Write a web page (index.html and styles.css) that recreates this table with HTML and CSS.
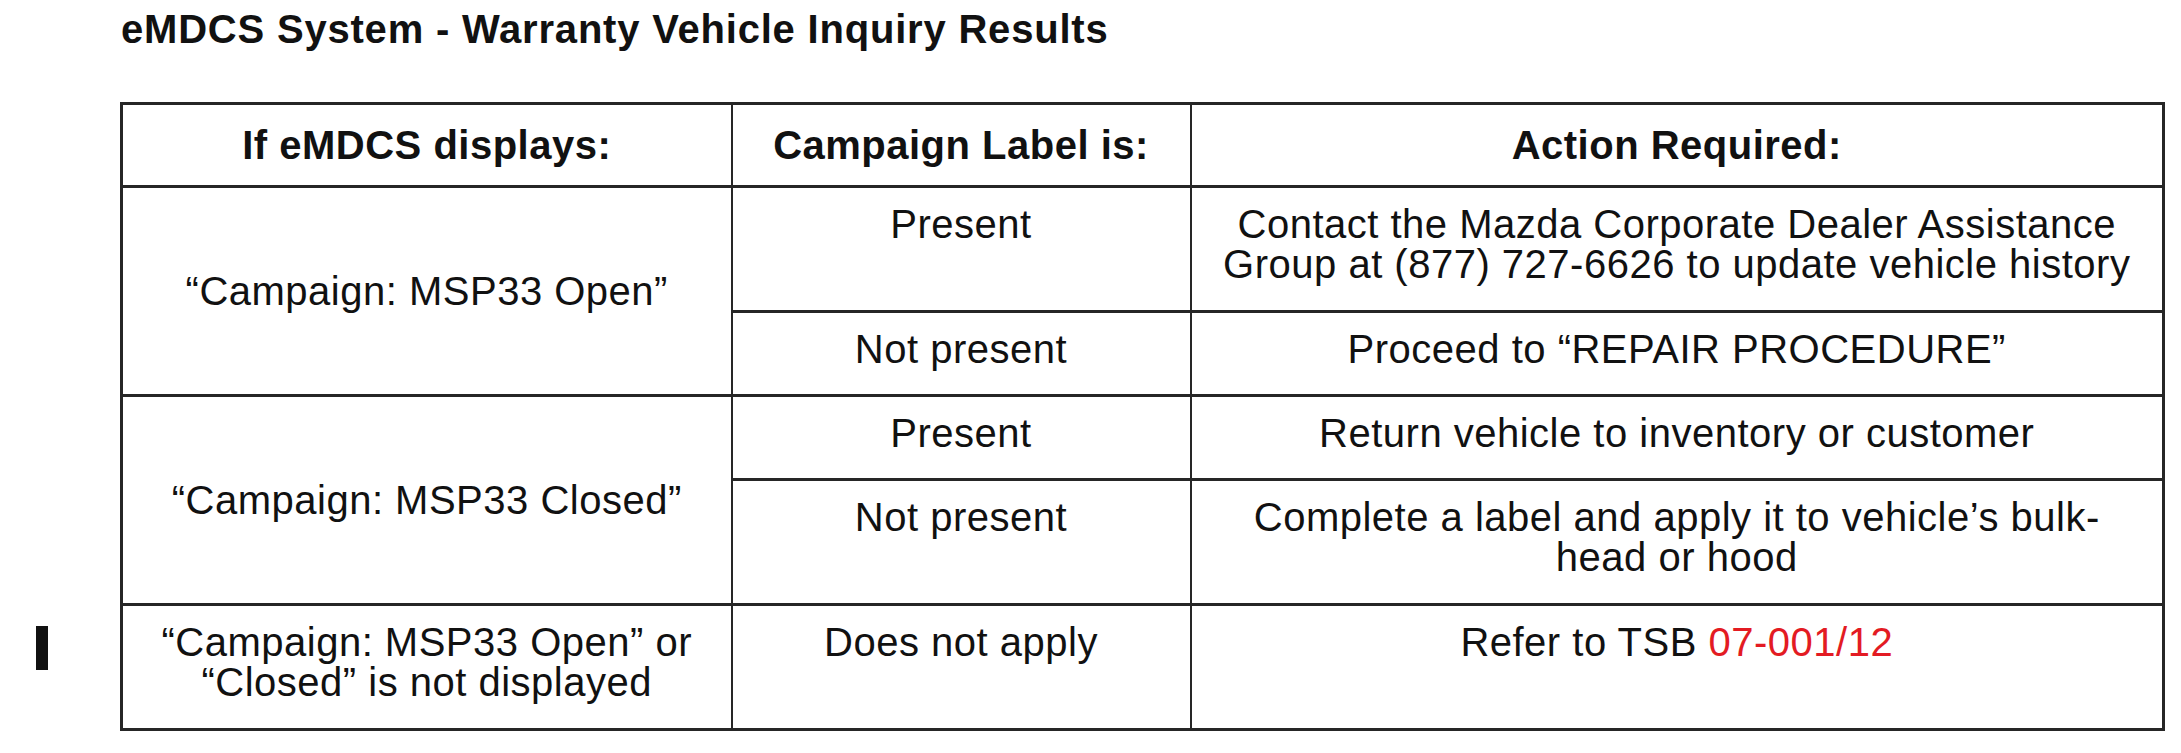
FILE: index.html
```html
<!DOCTYPE html>
<html>
<head>
<meta charset="utf-8">
<title>eMDCS System - Warranty Vehicle Inquiry Results</title>
<link rel="stylesheet" href="styles.css">
</head>
<body>
<main class="page">
  <h1 class="title">eMDCS System - Warranty Vehicle Inquiry Results</h1>
  <div class="layout">
    <div class="gutter"><span class="change-bar"></span></div>
    <table class="results">
      <colgroup><col class="c1"><col class="c2"><col class="c3"></colgroup>
      <thead>
        <tr class="r-head"><th>If eMDCS displays:</th><th>Campaign Label is:</th><th>Action Required:</th></tr>
      </thead>
      <tbody>
        <tr class="r-tall"><td rowspan="2" class="mid">“Campaign: MSP33 Open”</td><td>Present</td><td>Contact the Mazda Corporate Dealer Assistance<br>Group at (877) 727-6626 to update vehicle history</td></tr>
        <tr class="r-short"><td>Not present</td><td>Proceed to “REPAIR PROCEDURE”</td></tr>
        <tr class="r-short"><td rowspan="2" class="mid">“Campaign: MSP33 Closed”</td><td>Present</td><td>Return vehicle to inventory or customer</td></tr>
        <tr class="r-tall"><td>Not present</td><td>Complete a label and apply it to vehicle’s bulk-<br>head or hood</td></tr>
        <tr class="r-tall"><td>“Campaign: MSP33 Open” or<br>“Closed” is not displayed</td><td>Does not apply</td><td>Refer to TSB <span class="ref">07-001/12</span></td></tr>
      </tbody>
    </table>
  </div>
</main>
</body>
</html>
```
FILE: styles.css
```css
html, body {
  margin: 0;
  padding: 0;
  background: #ffffff;
}
.page {
  padding-top: 9px;
  font-family: "Liberation Sans", Arial, sans-serif;
  color: #111111;
}
.title {
  margin: 0 0 53px 121px;
  font-size: 40px;
  line-height: 40px;
  font-weight: bold;
  letter-spacing: 0.8px;
}
.layout {
  display: flex;
  align-items: flex-start;
}
.gutter {
  width: 120px;
  flex: none;
  padding-left: 36px;
  box-sizing: border-box;
}
.change-bar {
  display: block;
  width: 12px;
  height: 44px;
  margin-top: 524px;
  background: #111111;
}
.results {
  border-collapse: collapse;
  table-layout: fixed;
  width: 2042px;
  border: 3px solid #262626;
  font-size: 40px;
  line-height: 40px;
  letter-spacing: 0.5px;
}
.c1 { width: 610px; }
.c2 { width: 459px; }
.c3 { width: 973px; }
.results th,
.results td {
  border-top: 3px solid #262626;
  border-bottom: 3px solid #262626;
  border-left: 2px solid #262626;
  border-right: 2px solid #262626;
  text-align: center;
  padding: 16px 4px 0 4px;
  vertical-align: top;
}
.results th {
  font-weight: bold;
  vertical-align: middle;
  padding-top: 0;
}
.results td.mid {
  vertical-align: middle;
  padding-top: 0;
}
.r-head { height: 83px; }
.r-tall { height: 125px; }
.r-short { height: 84px; }
.ref {
  color: #e31b23;
}
```
